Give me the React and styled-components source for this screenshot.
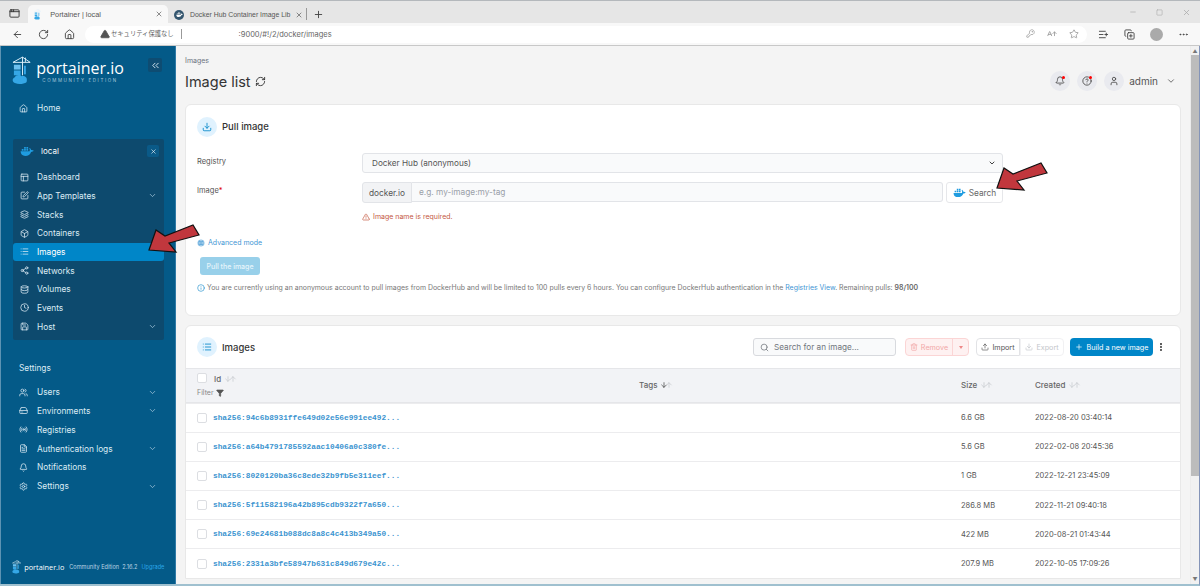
import styled, { createGlobalStyle } from "styled-components";
import {
  AppWindow, X, Plus, ArrowLeft, RotateCw, Home, TriangleAlert, KeyRound, AArrowUp, Star, ListPlus, CopyPlus, Ellipsis,
  Minus, Square, ChevronsLeft, ChevronDown, Layout, SquarePen, Layers, Box, List, Share2, Database, Clock, Save,
  Users, HardDrive, Radio, FileText, Bell, Settings, RefreshCw, CircleHelp, User, Download, Globe, Info, Search,
  Trash2, Upload, EllipsisVertical, ArrowDown, ArrowUp, Filter,
} from "lucide-react";

const GlobalStyle = createGlobalStyle`
  html, body { margin: 0; padding: 0; height: 100%; overflow: hidden; }
  body { font-family: Inter, "Noto Sans", sans-serif; background: #f4f4f4; }
  * { box-sizing: border-box; }
`;

const Page = styled.div`
  position: relative;
  width: 1200px;
  height: 586px;
  display: flex;
  flex-direction: column;
  overflow: hidden;
  border-top: 1px solid #b4b8bc;
`;

const TabBar = styled.div`
  height: 22px;
  display: flex;
  align-items: flex-end;
  background: #e6e6e6;
  color: #444;
  padding-left: 9px;
`;

const WindowBtn = styled.div`
  width: 19px;
  height: 20px;
  display: flex;
  align-items: center;
  color: #333;
`;

const Tab = styled.div`
  height: ${(p) => (p.$active ? "18px" : "17px")};
  width: ${(p) => (p.$active ? "140px" : "138px")};
  padding: 0 ${(p) => (p.$active ? "5px" : "3px")} 0 6px;
  display: flex;
  align-items: center;
  gap: 6px;
  font-family: "Liberation Sans", sans-serif;
  font-size: 6.9px;
  color: #555;
  background: ${(p) => (p.$active ? "#f8f8f8" : "transparent")};
  border-radius: 5px 5px 0 0;
  white-space: nowrap;
`;

const TabTitle = styled.span`
  flex: 1;
  min-width: 0;
`;

const ActiveTabTitle = styled(TabTitle)`
  margin-left: 3px;
  font-size: 7.3px;
`;

const TabFavicon = styled.span`
  width: 10px;
  height: 10px;
  border-radius: 50%;
  background: ${(p) => p.$color};
  flex: none;
  display: flex;
  align-items: center;
  justify-content: center;
`;

const NewTab = styled.div`
  height: 12px;
  margin-bottom: 3px;
  padding-left: 6px;
  border-left: 1px solid #999;
  display: flex;
  align-items: center;
  color: #444;
`;

const WindowControls = styled.div`
  margin-left: auto;
  height: 22px;
  display: flex;
  align-items: center;
  gap: 19px;
  padding-right: 9px;
  color: #aaa;
`;

const AddressRow = styled.div`
  height: 23px;
  display: flex;
  align-items: center;
  padding: 0 9px 0 12px;
  background: #f8f8f8;
  border-bottom: 1px solid #c8c8c8;
  color: #444;
`;

const NavIcons = styled.div`
  width: 73px;
  display: flex;
  gap: 15px;
  flex: none;
`;

const Omnibox = styled.div`
  width: 1002px;
  height: 17px;
  flex: none;
  padding: 0 8px 0 15px;
  display: flex;
  align-items: center;
  border-radius: 9px;
  background: #fff;
  font-size: 7.5px;
  color: #666;
  white-space: nowrap;
`;

const SecurityText = styled.span`
  font-family: "Noto Sans CJK JP", sans-serif;
  margin-left: 1px;
  padding-right: 7px;
  border-right: 1px solid #999;
  line-height: 10px;
  font-size: 6.3px;
`;

const UrlText = styled.span`
  margin-left: 57px;
  font-size: 7.5px;
  flex: 1;
`;

const OmniIcons = styled.div`
  display: flex;
  gap: 12px;
  color: #999;
`;

const ToolbarIcons = styled.div`
  margin-left: 11px;
  display: flex;
  align-items: center;
  gap: 15px;
  flex: 1;
  color: #444;
`;

const Avatar = styled.div`
  width: 13px;
  height: 13px;
  border-radius: 50%;
  background: #aaa;
`;

const Body = styled.div`
  flex: 1;
  display: flex;
  min-height: 0;
  border-bottom: 2px solid #9fc0cf;
  border-right: 1px solid #8494b8;
`;

const Sidebar = styled.aside`
  width: 176px;
  flex: none;
  display: flex;
  flex-direction: column;
  background: #045a88;
  border-left: 1px solid #5d93b3;
  border-right: 1px solid #2f7aa6;
  color: #dcebf4;
  font-size: 8.3px;
  overflow: hidden;
`;

const LogoRow = styled.div`
  height: 41px;
  margin-top: 10px;
  padding-left: 11px;
  display: flex;
  align-items: flex-start;
  position: relative;
`;

const LogoText = styled.div`
  margin-left: 5px;
  margin-top: 3px;
  font-family: "Open Sans", sans-serif;
  font-size: 16px;
  line-height: 18px;
  color: #fff;
`;

const LogoSub = styled.div`
  margin-left: 5px;
  margin-top: 1px;
  font-size: 4.5px;
  line-height: 6px;
  letter-spacing: 1.6px;
  color: #a5c6da;
  text-align: center;
  white-space: nowrap;
`;

const CollapseBtn = styled.div`
  width: 14px;
  height: 14px;
  margin-left: auto;
  margin-right: 13px;
  margin-top: 2px;
  display: flex;
  align-items: center;
  justify-content: center;
  background: #0e4c72;
  border-radius: 2px;
  color: #dcebf4;
`;

const NavItem = styled.div`
  height: ${(p) => (p.$inPanel ? "18.7px" : "18.8px")};
  flex: none;
  display: flex;
  align-items: center;
  gap: ${(p) => (p.$inPanel ? "8px" : "9px")};
  padding: 0 ${(p) => (p.$inPanel ? "7px" : "18px")} 0 ${(p) => (p.$inPanel ? "7px" : "18px")};
  border-radius: 3px;
  background: ${(p) => (p.$active ? "#0086c8" : "transparent")};
  color: ${(p) => (p.$active ? "#fff" : "#dcebf4")};
  svg:first-child { color: #dcebf4; flex: none; }
`;

const NavLabel = styled.span`
  flex: 1;
  white-space: nowrap;
`;

const Chevron = styled(ChevronDown)`
  color: #a4c5d9;
`;

const HomeItem = styled(NavItem)`
  margin-top: 2px;
`;

const EnvPanel = styled.div`
  margin: 21px 11px 0 12px;
  height: 201px;
  padding-top: 2px;
  background: #0d4a6e;
  border-radius: 2px;
  display: flex;
  flex-direction: column;
`;

const EnvHeader = styled.div`
  height: 21px;
  margin-bottom: 6px;
  padding: 0 5px 0 7px;
  display: flex;
  align-items: center;
  font-size: 8px;
  color: #fff;
  span { flex: 1; margin-left: 7px; }
`;

const EnvClose = styled.div`
  width: 12px;
  height: 12px;
  display: flex;
  align-items: center;
  justify-content: center;
  background: #0a5a88;
  border-radius: 2px;
`;

const SectionTitle = styled.div`
  margin: 23px 0 9px 18px;
  height: 11px;
  font-size: 8.3px;
  line-height: 11px;
  color: #dcebf4;
`;

const SidebarFooter = styled.div`
  margin-top: auto;
  height: 24px;
  margin-bottom: 5px;
  padding-left: 11px;
  display: flex;
  align-items: center;
  gap: 2px;
  font-size: 5.6px;
  white-space: nowrap;
  color: #bcd5e4;
`;

const FooterBrand = styled.span`
  margin-left: 1px;
  margin-right: 3px;
  font-family: "Open Sans", sans-serif;
  font-size: 7.3px;
  color: #fff;
`;

const Upgrade = styled.span`
  color: #2ba6e8;
  margin-left: 2px;
`;

const Main = styled.main`
  flex: 1;
  min-width: 0;
  padding: 10px 9px 0;
  overflow: hidden;
  background: #f4f4f4;
`;

const Breadcrumb = styled.div`
  font-size: 7px;
  line-height: 10px;
  color: #6b7280;
`;

const TitleRow = styled.div`
  height: 30px;
  margin-bottom: 8px;
  display: flex;
  align-items: center;
`;

const PageTitle = styled.h1`
  margin: 0;
  font-size: 14.5px;
  font-weight: 400;
  color: #333;
  display: flex;
  align-items: center;
  gap: 4px;
`;

const UserArea = styled.div`
  margin-left: auto;
  margin-right: 5px;
  display: flex;
  align-items: center;
  font-size: 10px;
  color: #555;
`;

const RoundBtn = styled.div`
  position: relative;
  width: 20px;
  height: 20px;
  margin-left: 7px;
  border-radius: 50%;
  background: #e9eaef;
  display: flex;
  align-items: center;
  justify-content: center;
  color: #444;
`;

const RedDot = styled.span`
  position: absolute;
  top: 5px;
  right: 5px;
  width: 3px;
  height: 3px;
  border-radius: 50%;
  background: #f00;
`;

const AdminName = styled.span`
  margin: 0 8px 0 5px;
`;

const Card = styled.section`
  background: #fff;
  border: 1px solid #e8e8e8;
  border-radius: 6px;
  margin-bottom: 9px;
`;

const PullCard = styled(Card)`
  height: 212px;
  padding: 0 11px;
`;

const CardHeader = styled.div`
  height: 42px;
  display: flex;
  align-items: center;
  gap: 5px;
  font-size: 9.5px;
  font-weight: 500;
  color: #333;
`;

const PullHeader = styled(CardHeader)`
  height: 43px;
  margin-bottom: 5px;
`;

const IconCircle = styled.div`
  width: 20px;
  height: 20px;
  border-radius: 50%;
  background: #e0f2fe;
  color: #0086c8;
  display: flex;
  align-items: center;
  justify-content: center;
`;

const FormRow = styled.div`
  display: grid;
  grid-template-columns: 165px 641px;
  margin-bottom: ${(p) => p.$mb || "9px"};
  font-size: 7.5px;
`;

const FieldLabel = styled.label`
  color: #555;
  line-height: 18px;
  span { color: #d00; }
`;

const SelectBox = styled.div`
  height: 20px;
  padding: 0 6px 0 9px;
  display: flex;
  align-items: center;
  justify-content: space-between;
  background: #f9fafb;
  border: 1px solid #e2e4e8;
  border-radius: 3px;
  color: #555;
  font-size: 8.2px;
`;

const InputGroup = styled.div`
  display: flex;
  height: 21px;
`;

const Addon = styled.div`
  width: 50px;
  display: flex;
  align-items: center;
  justify-content: center;
  background: #f2f3f5;
  border: 1px solid #e2e4e8;
  border-radius: 3px 0 0 3px;
  color: #555;
  font-size: 8.3px;
`;

const TextInput = styled.div`
  width: 531px;
  height: 20px;
  padding-left: 7px;
  display: flex;
  align-items: center;
  background: #f9fafb;
  border: 1px solid #e2e4e8;
  border-left: 0;
  border-radius: 0 3px 3px 0;
  color: #9aa0a8;
  font-size: 8.3px;
`;

const SearchBtn = styled.div`
  margin-left: 3px;
  width: 57px;
  display: flex;
  align-items: center;
  justify-content: center;
  gap: 3px;
  border: 1px solid #e6e7ea;
  border-radius: 3px;
  background: #fff;
  color: #666;
  font-size: 8.3px;
`;

const ErrorText = styled.div`
  grid-column: 2;
  display: flex;
  align-items: center;
  gap: 3px;
  color: #c4573f;
  font-size: 7px;
  line-height: 12px;
`;

const AdvancedLink = styled.div`
  margin-top: 14px;
  display: flex;
  align-items: center;
  gap: 3px;
  color: #3f96d4;
  font-size: 7px;
  line-height: 12px;
  svg { fill: #3f96d4; stroke: #cfe5f5; }
`;

const PullBtn = styled.div`
  margin: 8px 0 7px 3px;
  width: 60px;
  height: 18px;
  display: flex;
  align-items: center;
  justify-content: center;
  border-radius: 3px;
  background: #98d0ea;
  color: #e6f4fb;
  font-size: 7px;
  font-weight: 500;
`;

const InfoLine = styled.div`
  display: flex;
  align-items: center;
  gap: 2px;
  font-size: 6.95px;
  line-height: 12px;
  color: #777;
  white-space: nowrap;
  svg { color: #2b94cf; flex: none; }
  a { color: #3f96d4; }
  b { font-weight: 600; color: #666; }
`;

const TableCard = styled(Card)`
  margin-bottom: 0;
  border-radius: 6px 6px 0 0;
`;

const TableHeader = styled(CardHeader)`
  padding: 0 11px;
`;

const Actions = styled.div`
  margin-left: auto;
  display: flex;
  align-items: center;
  font-weight: 400;
  font-size: 7.2px;
`;

const TableSearch = styled.div`
  width: 143px;
  height: 18px;
  margin-right: 9px;
  padding-left: 6px;
  display: flex;
  align-items: center;
  gap: 5px;
  background: #f9fafb;
  border: 1px solid #d8dade;
  border-radius: 3px;
  color: #70757c;
  font-size: 8.2px;
`;

const SplitBtn = styled.div`
  width: 64px;
  height: 18px;
  display: flex;
  margin-right: 7px;
  background: #fef1f1;
  border: 1px solid #fbd5d5;
  border-radius: 4px;
  color: #f2a8a8;
`;

const SplitMain = styled.div`
  flex: 1;
  display: flex;
  align-items: center;
  justify-content: center;
  gap: 3px;
  border-right: 1px solid #fbd5d5;
`;

const SplitCaret = styled.div`
  width: 15px;
  display: flex;
  align-items: center;
  justify-content: center;
  &::after {
    content: "";
    border-left: 2.5px solid transparent;
    border-right: 2.5px solid transparent;
    border-top: 3px solid #e88;
  }
`;

const GroupBtn = styled.div`
  width: 44px;
  height: 18px;
  display: flex;
  align-items: center;
  justify-content: center;
  gap: 3px;
  background: #fff;
  border: 1px solid ${(p) => (p.$disabled ? "#f1f1f3" : "#e2e3e6")};
  border-radius: ${(p) => (p.$disabled ? "0 4px 4px 0" : "4px 0 0 4px")};
  color: ${(p) => (p.$disabled ? "#c3c6cb" : "#555")};
`;

const PrimaryBtn = styled.div`
  width: 83px;
  height: 18px;
  margin-left: 6px;
  display: flex;
  align-items: center;
  justify-content: center;
  gap: 4px;
  background: #0086c8;
  border-radius: 4px;
  color: #fff;
`;

const MoreBtn = styled.div`
  width: 13px;
  margin-right: 3px;
  display: flex;
  justify-content: flex-end;
  color: #333;
`;

const Row = styled.div`
  display: grid;
  grid-template-columns: 17px 425px 322px 74px 1fr;
  align-items: center;
  height: 29.2px;
  padding-left: 11px;
  border-top: 1px solid #ececee;
  font-size: 7.5px;
  color: #555;
`;

const HeadRow = styled(Row)`
  height: 34.5px;
  background: #f2f3f6;
  border-top: 1px solid #e5e6e9;
  border-bottom: 1px solid #e5e6e9;
  font-size: 8px;
  color: #666;
  font-weight: 500;
`;

const HeadCell = styled.div`
  display: flex;
  align-items: center;
  gap: 3px;
  line-height: 12px;
`;

const SortIcons = styled.span`
  display: flex;
  color: ${(p) => (p.$dark ? "#333" : "#c2c5ca")};
`;

const FilterText = styled.div`
  display: flex;
  align-items: center;
  gap: 2px;
  margin-left: -17px;
  margin-top: 3px;
  font-size: 7px;
  font-weight: 400;
  line-height: 9px;
  color: #888;
  svg { fill: #555; color: #555; }
`;

const CheckBox = styled.span`
  display: block;
  width: 10px;
  height: 10px;
  border: 1px solid #dcdee2;
  border-radius: 2px;
  background: #fff;
`;

const HeadCheck = styled(CheckBox)`
  align-self: start;
  margin-top: 4px;
`;

const ShaLink = styled.span`
  margin-left: -1px;
  font-family: "Liberation Mono", monospace;
  font-size: 7.8px;
  font-weight: 700;
  color: #3b94d0;
`;

const ArrowMark = styled.svg`
  position: absolute;
  left: ${(p) => p.$x}px;
  top: ${(p) => p.$y}px;
`;

const RedArrow = ({ x, y }) => (
  <ArrowMark $x={x} $y={y} width="56" height="34" viewBox="0 0 56 34">
    <path d="M2 27 L9 7 L18 13 L46 2 L52 12 L22 20 L29 29 Z" fill="#c1373d" stroke="#111" strokeWidth="1.2" strokeLinejoin="miter" />
  </ArrowMark>
);

const Whale = ({ size = 14, color = "#1f9ce0" }) => (
  <svg width={size} height={size * 0.75} viewBox="0 0 24 18" style={{ flex: "none" }}>
    <path fill={color} d="M1 9h15.500c.6-1.600.4-3.400-.6-5l1-.7c1.300 1 2 2.200 2.200 3.600 1.400-.2 2.900 0 4.400 1-1 1.700-2.500 2.300-4.500 2.400C17.500 14.800 14 17 9 17 4 17 1.300 14 1 9z" />
    <path fill={color} d="M3 5h3v3H3zM7 5h3v3H7zM11 5h3v3h-3zM7 1.500h3v3H7zM11 1.500h3v3h-3z" />
  </svg>
);

const PortainerMark = ({ h = 30 }) => (
  <svg width={h * 0.66} height={h} viewBox="0 0 20 30" style={{ flex: "none" }}>
    <path d="M1 6.500 H19 M11 1 V20 M11 1 L1 6.500 M11 1 L19 6.500 M14 1.500 V6" stroke="#dff1fb" strokeWidth="1" fill="none" />
    <rect x="2" y="9" width="7" height="5" fill="#6cc0ee" />
    <rect x="2" y="15" width="7" height="5" fill="#35a7e6" />
    <rect x="12.500" y="10" width="2" height="9" fill="#35a7e6" />
    <path d="M3 28c-3-1-3-5 0-6 1-3 6-3 7-1 3-1 6 1 5.500 4 .5 2-1 3.500-3.500 3.500-3 .8-6 .8-9-.5z" fill="#35a7e6" />
  </svg>
);

const envItems = [
  { icon: Layout, label: "Dashboard" },
  { icon: SquarePen, label: "App Templates", more: true },
  { icon: Layers, label: "Stacks" },
  { icon: Box, label: "Containers" },
  { icon: List, label: "Images", active: true },
  { icon: Share2, label: "Networks" },
  { icon: Database, label: "Volumes" },
  { icon: Clock, label: "Events" },
  { icon: Save, label: "Host", more: true },
];

const settingItems = [
  { icon: Users, label: "Users", more: true },
  { icon: HardDrive, label: "Environments", more: true },
  { icon: Radio, label: "Registries" },
  { icon: FileText, label: "Authentication logs", more: true },
  { icon: Bell, label: "Notifications" },
  { icon: Settings, label: "Settings", more: true },
];

const images = [
  ["sha256:94c6b8931ffe649d02e56e991ee492...", "6.6 GB", "2022-08-20 03:40:14"],
  ["sha256:a64b4791785592aac10406a0c380fe...", "5.6 GB", "2022-02-08 20:45:36"],
  ["sha256:8020120ba36c8ede32b9fb5e311eef...", "1 GB", "2022-12-21 23:45:09"],
  ["sha256:5f11582196a42b895cdb9322f7a650...", "286.8 MB", "2022-11-21 09:40:18"],
  ["sha256:69e24681b088dc8a8c4c413b349a50...", "422 MB", "2020-08-21 01:43:44"],
  ["sha256:2331a3bfe58947b631c849d679e42c...", "207.9 MB", "2022-10-05 17:09:26"],
];

const UpArrow = styled(ArrowUp)`
  margin-left: -3px;
  color: #c2c5ca;
`;

const Sort = ({ dark }) => (
  <SortIcons $dark={dark}>
    <ArrowDown size={8} />
    <UpArrow size={8} />
  </SortIcons>
);

const Scrollbar = styled.div`
  width: 9px;
  flex: none;
  background: #f1f1f1;
  border-left: 1px solid #ececec;
  display: flex;
  flex-direction: column;
  align-items: center;
  color: #777;
  font-size: 5px;
  line-height: 7px;
  padding: 2px 0 1px;
`;

const ScrollThumb = styled.div`
  width: 8px;
  height: 421px;
  margin: 0 0 auto;
  background: #bcbcbc;
`;

const App = () => {
  return (
    <Page>
      <GlobalStyle />
      <TabBar>
        <WindowBtn><AppWindow size={11} /></WindowBtn>
        <Tab $active>
          <PortainerMark h={11} />
          <ActiveTabTitle>Portainer | local</ActiveTabTitle>
          <X size={8} />
        </Tab>
        <Tab>
          <TabFavicon $color="#34566f"><Whale size={7} color="#fff" /></TabFavicon>
          <TabTitle>Docker Hub Container Image Lib</TabTitle>
          <X size={8} />
        </Tab>
        <NewTab><Plus size={11} /></NewTab>
        <WindowControls>
          <Minus size={8} />
          <Square size={7} />
          <X size={9} />
        </WindowControls>
      </TabBar>

      <AddressRow>
        <NavIcons>
          <ArrowLeft size={11} />
          <RotateCw size={11} />
          <Home size={11} />
        </NavIcons>
        <Omnibox>
          <TriangleAlert size={10} fill="#555" color="#555" />
          <SecurityText>セキュリティ保護なし</SecurityText>
          <UrlText>:9000/#!/2/docker/images</UrlText>
          <OmniIcons>
            <KeyRound size={9} />
            <AArrowUp size={10} />
            <Star size={10} />
          </OmniIcons>
        </Omnibox>
        <ToolbarIcons>
          <ListPlus size={11} />
          <CopyPlus size={11} />
          <Avatar />
          <Ellipsis size={11} />
        </ToolbarIcons>
      </AddressRow>

      <Body>
        <Sidebar>
          <LogoRow>
            <PortainerMark h={29} />
            <div>
              <LogoText>portainer.io</LogoText>
              <LogoSub>COMMUNITY EDITION</LogoSub>
            </div>
            <CollapseBtn><ChevronsLeft size={11} /></CollapseBtn>
          </LogoRow>
          <HomeItem>
            <Home size={9} />
            <NavLabel>Home</NavLabel>
          </HomeItem>
          <EnvPanel>
            <EnvHeader>
              <Whale size={14} />
              <span>local</span>
              <EnvClose><X size={7} /></EnvClose>
            </EnvHeader>
            {envItems.map((item) => (
              <NavItem key={item.label} $inPanel $active={item.active}>
                <item.icon size={9} />
                <NavLabel>{item.label}</NavLabel>
                {item.more && <Chevron size={9} />}
              </NavItem>
            ))}
          </EnvPanel>
          <SectionTitle>Settings</SectionTitle>
          {settingItems.map((item) => (
            <NavItem key={item.label}>
              <item.icon size={9} />
              <NavLabel>{item.label}</NavLabel>
              {item.more && <Chevron size={9} />}
            </NavItem>
          ))}
          <SidebarFooter>
            <PortainerMark h={14} />
            <FooterBrand>portainer.io</FooterBrand>
            <span>Community Edition&nbsp; 2.16.2</span>
            <Upgrade>Upgrade</Upgrade>
          </SidebarFooter>
        </Sidebar>

        <Main>
          <Breadcrumb>Images</Breadcrumb>
          <TitleRow>
            <PageTitle>Image list <RefreshCw size={11} /></PageTitle>
            <UserArea>
              <RoundBtn><Bell size={10} /><RedDot /></RoundBtn>
              <RoundBtn><CircleHelp size={10} /><RedDot /></RoundBtn>
              <RoundBtn><User size={10} /></RoundBtn>
              <AdminName>admin</AdminName>
              <ChevronDown size={10} />
            </UserArea>
          </TitleRow>

          <PullCard>
            <PullHeader>
              <IconCircle><Download size={10} /></IconCircle>
              Pull image
            </PullHeader>
            <FormRow>
              <FieldLabel>Registry</FieldLabel>
              <SelectBox>
                Docker Hub (anonymous)
                <ChevronDown size={8} color="#444" strokeWidth={3} />
              </SelectBox>
            </FormRow>
            <FormRow $mb="8px">
              <FieldLabel>Image<span>*</span></FieldLabel>
              <InputGroup>
                <Addon>docker.io</Addon>
                <TextInput>e.g. my-image:my-tag</TextInput>
                <SearchBtn><Whale size={13} />Search</SearchBtn>
              </InputGroup>
            </FormRow>
            <FormRow $mb="0">
              <ErrorText><TriangleAlert size={8} /> Image name is required.</ErrorText>
            </FormRow>
            <AdvancedLink><Globe size={8} /> Advanced mode</AdvancedLink>
            <PullBtn>Pull the image</PullBtn>
            <InfoLine>
              <Info size={8} />
              <span>
                You are currently using an anonymous account to pull images from DockerHub and will be limited to 100 pulls every 6 hours. You can configure DockerHub authentication in the <a>Registries View</a>. Remaining pulls: <b>98/100</b>
              </span>
            </InfoLine>
          </PullCard>

          <TableCard>
            <TableHeader>
              <IconCircle><List size={10} /></IconCircle>
              Images
              <Actions>
                <TableSearch><Search size={9} />Search for an image...</TableSearch>
                <SplitBtn>
                  <SplitMain><Trash2 size={8} />Remove</SplitMain>
                  <SplitCaret />
                </SplitBtn>
                <GroupBtn><Upload size={8} />Import</GroupBtn>
                <GroupBtn $disabled><Download size={8} />Export</GroupBtn>
                <PrimaryBtn><Plus size={8} />Build a new image</PrimaryBtn>
                <MoreBtn><EllipsisVertical size={10} strokeWidth={3} /></MoreBtn>
              </Actions>
            </TableHeader>
            <HeadRow>
              <HeadCheck />
              <div>
                <HeadCell>Id <Sort /></HeadCell>
                <FilterText>Filter <Filter size={8} /></FilterText>
              </div>
              <HeadCell>Tags <Sort dark /></HeadCell>
              <HeadCell>Size <Sort /></HeadCell>
              <HeadCell>Created <Sort /></HeadCell>
            </HeadRow>
            {images.map(([id, size, created]) => (
              <Row key={id}>
                <CheckBox />
                <ShaLink>{id}</ShaLink>
                <span />
                <span>{size}</span>
                <span>{created}</span>
              </Row>
            ))}
          </TableCard>
        </Main>
        <Scrollbar>
          ▲
          <ScrollThumb />
          ▼
        </Scrollbar>
      </Body>

      <RedArrow x={147} y={222} />
      <RedArrow x={995} y={160} />
    </Page>
  );
};

export default App;
